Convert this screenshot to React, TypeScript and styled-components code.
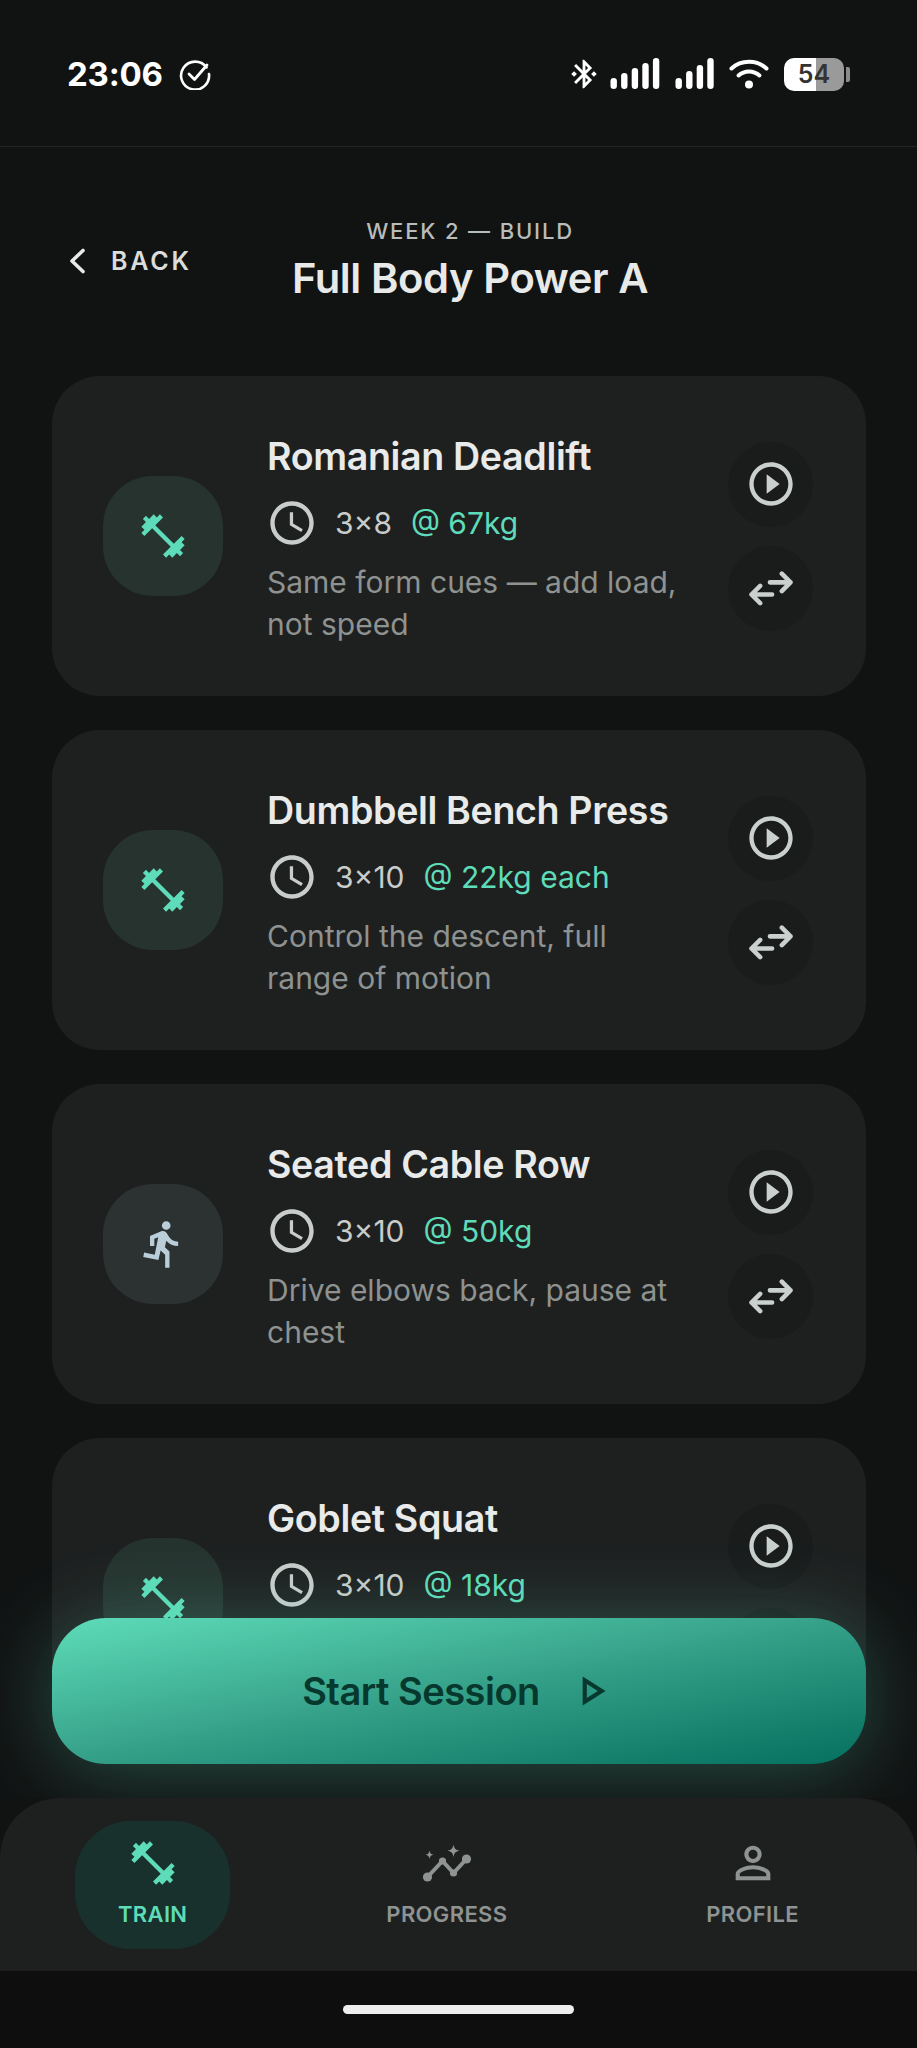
import React from "react";
import styled, { createGlobalStyle } from "styled-components";
import {
  MdAccessTime,
  MdBluetoothConnected,
  MdDirectionsRun,
  MdFitnessCenter,
  MdOutlinePlayArrow,
  MdPersonOutline,
  MdPlayCircleOutline,
} from "react-icons/md";

const GlobalStyle = createGlobalStyle`
  html, body { margin: 0; padding: 0; background: #111313; }
  * { box-sizing: border-box; }
  body { font-family: Inter, "Noto Sans", sans-serif; }
`;

const Page = styled.div`
  width: 917px;
  height: 2048px;
  display: flex;
  flex-direction: column;
  overflow: hidden;
  background: #111313;
`;

const StatusBar = styled.div`
  height: 147px;
  flex: none;
  border-bottom: 1px solid #232525;
  padding: 56px 67px 0 67px;
  display: flex;
  justify-content: space-between;
  align-items: flex-start;
`;
const StatusLeft = styled.div`
  display: flex;
  align-items: center;
  gap: 16px;
  height: 36px;
`;
const Time = styled.span`
  font-size: 33px;
  font-weight: 700;
  color: #fff;
  letter-spacing: -0.2px;
`;
const StatusRight = styled.div`
  display: flex;
  align-items: center;
  height: 36px;
  color: #fff;
`;
const Battery = styled.div`
  width: 60px;
  height: 33px;
  border-radius: 10px;
  margin-left: 15px;
  background: linear-gradient(90deg, #fff 53%, #9a9a9a 53%);
  color: #333;
  font-size: 25px;
  font-weight: 600;
  display: flex;
  align-items: center;
  justify-content: center;
  position: relative;
`;
const BatteryCap = styled.div`
  width: 4px;
  height: 15px;
  margin-left: 2px;
  border-radius: 0 2px 2px 0;
  background: #8a8a8a;
`;

const Header = styled.header`
  height: 229px;
  flex: none;
  display: flex;
  align-items: flex-start;
  padding: 70px 0 0 68px;
`;
const BackButton = styled.div`
  display: flex;
  align-items: center;
  gap: 25px;
  width: 224px;
  height: 30px;
  margin-top: 29px;
  font-size: 25px;
  font-weight: 600;
  letter-spacing: 2.8px;
  color: #dadddc;
`;
const TitleBlock = styled.div`
  display: flex;
  flex-direction: column;
  align-items: center;
`;
const Eyebrow = styled.div`
  font-size: 22px;
  line-height: 28px;
  font-weight: 500;
  letter-spacing: 1.85px;
  color: #b8bcba;
`;
const Title = styled.h1`
  margin: 7px 0 0;
  font-size: 41.7px;
  line-height: 52px;
  font-weight: 600;
  letter-spacing: -0.4px;
  color: #e8eae9;
`;

const Main = styled.main`
  flex: 1;
  min-height: 0;
  position: relative;
  overflow: hidden;
`;
const List = styled.div`
  display: flex;
  flex-direction: column;
  gap: 34px;
  padding: 0 51px 0 52px;
`;
const Card = styled.article`
  height: 320px;
  flex: none;
  border-radius: 48px;
  background: #1e2020;
  display: flex;
  align-items: center;
  padding: 0 53px 0 51px;
`;
const IconBox = styled.div<{ $tone: "green" | "slate" }>`
  width: 120px;
  height: 120px;
  flex: none;
  border-radius: 50px;
  display: flex;
  align-items: center;
  justify-content: center;
  background: ${(p) => (p.$tone === "green" ? "#26332f" : "#2c3132")};
  color: ${(p) => (p.$tone === "green" ? "#5edcb9" : "#b9ced9")};
`;
const Body = styled.div`
  width: 415px;
  flex: none;
  margin-left: 44px;
  padding-top: 7px;
  display: flex;
  flex-direction: column;
`;
const Name = styled.h2`
  margin: 0;
  font-size: 37.6px;
  line-height: 46px;
  font-weight: 600;
  letter-spacing: -0.35px;
  color: #e9ebea;
`;
const Meta = styled.div`
  display: flex;
  align-items: center;
  height: 52px;
  margin-top: 17px;
  margin-left: -1px;
  font-size: 30px;
  color: #c8ccca;
`;
const Sets = styled.span`
  margin-left: 17px;
`;
const Load = styled.span`
  margin-left: 19px;
  color: #5edcb9;
`;
const Note = styled.p`
  margin: 12px 0 0;
  min-height: 84px;
  font-size: 30px;
  line-height: 42px;
  color: #8e9290;
`;
const Actions = styled.div`
  margin-left: auto;
  display: flex;
  flex-direction: column;
  gap: 19px;
`;
const RoundButton = styled.div`
  width: 85px;
  height: 85px;
  border-radius: 50%;
  background: #1a1c1c;
  color: #c9d0cd;
  display: flex;
  align-items: center;
  justify-content: center;
`;
const StartButton = styled.div`
  position: absolute;
  left: 52px;
  right: 51px;
  bottom: 34px;
  height: 146px;
  border-radius: 54px;
  background: linear-gradient(to bottom right, #5edcb9 0%, #35a088 50%, #04705e 100%);
  box-shadow: 0 6px 80px rgba(94, 220, 185, 0.3);
  display: flex;
  align-items: center;
  justify-content: center;
  gap: 26px;
  color: #06382d;
  font-size: 38px;
  font-weight: 600;
  letter-spacing: -0.5px;
`;

const Nav = styled.nav`
  height: 173px;
  flex: none;
  position: relative;
  border-radius: 60px 60px 0 0;
  background: #1e2020;
  display: flex;
  justify-content: space-between;
  align-items: center;
  padding: 0 75px;
`;
const NavItem = styled.div<{ $active?: boolean }>`
  height: 128px;
  padding: 16px 43px 0;
  border-radius: 56px;
  display: flex;
  flex-direction: column;
  align-items: center;
  background: ${(p) => (p.$active ? "#18312c" : "transparent")};
  color: ${(p) => (p.$active ? "#5edcb9" : "#8f9391")};
`;
const NavLabel = styled.span`
  margin-top: 11px;
  font-size: 22px;
  line-height: 28px;
  font-weight: 600;
  letter-spacing: 0.35px;
`;
const HomeArea = styled.div`
  height: 77px;
  flex: none;
  background: #0e0e0e;
  display: flex;
  justify-content: center;
  padding-top: 34px;
`;
const HomePill = styled.div`
  width: 231px;
  height: 9px;
  border-radius: 5px;
  background: #eeeeee;
`;

const ChevronBack = () => (
  <svg width="18" height="26" viewBox="0 0 18 26" fill="none">
    <path d="M15 2.5 4 13l11 10.5" stroke="#e8eae9" strokeWidth="3.6" strokeLinecap="round" strokeLinejoin="round" />
  </svg>
);

const CheckCircle = () => (
  <svg width="32" height="32" viewBox="0 0 32 32" fill="none">
    <path d="M27.5 9.5A14 14 0 1 0 30 16" stroke="#fff" strokeWidth="2.6" strokeLinecap="round" />
    <path d="M10 16l5.5 5.5L28 7" stroke="#fff" strokeWidth="2.8" strokeLinecap="round" strokeLinejoin="round" />
  </svg>
);

const Signal = ({ bars }: { bars: number[] }) => (
  <svg width={bars.length * 10.6} height="32" viewBox={`0 0 ${bars.length * 10.6} 32`}>
    {bars.map((h, i) => (
      <rect key={i} x={i * 10.6 + 0.5} y={31 - h} width="6.4" height={h} rx="3.2" fill="#fff" />
    ))}
  </svg>
);

const Wifi = () => (
  <svg width="40" height="32" viewBox="0 0 40 32" fill="none" style={{ marginLeft: 12 }}>
    <path d="M2.5 10.5C12 1.5 28 1.5 37.5 10.5" stroke="#fff" strokeWidth="4" strokeLinecap="round" />
    <path d="M9.5 17.5c6-5.5 15-5.5 21 0" stroke="#fff" strokeWidth="4" strokeLinecap="round" />
    <circle cx="20" cy="26.5" r="4" fill="#fff" />
  </svg>
);

const Swap = () => (
  <svg width="52" height="52" viewBox="0 0 24 24" fill="none">
    <path d="M11.5 9.4H21M17 5.4l4 4-4 4M12.5 15H3M7 11l-4 4 4 4" stroke="currentColor" strokeWidth="2.1" strokeLinecap="round" strokeLinejoin="round" />
  </svg>
);

const ProgressGlyph = () => (
  <svg width="52" height="52" viewBox="0 0 52 52" fill="currentColor">
    <path d="M6.5 40 21.5 24l11 12 13-14" fill="none" stroke="currentColor" strokeWidth="4" strokeLinejoin="round" />
    <circle cx="6.5" cy="40" r="4.6" />
    <circle cx="21.5" cy="24" r="3.6" />
    <circle cx="32.5" cy="36" r="3.6" />
    <circle cx="45.5" cy="22" r="4.6" />
    <path d="M32.5 7.5c.8 4 2 5.4 6 6.2-4 .8-5.2 2-6 6.2-.8-4.2-2-5.4-6-6.2 4-.8 5.2-2.2 6-6.2z" />
    <path d="M8.5 13.5c.5 2.8 1.3 3.6 4 4.2-2.7.6-3.5 1.4-4 4.2-.5-2.8-1.3-3.6-4-4.2 2.7-.6 3.5-1.4 4-4.2z" />
  </svg>
);

type Exercise = {
  name: string;
  sets: string;
  load: string;
  note: string;
  kind: "green" | "slate";
};

const exercises: Exercise[] = [
  { name: "Romanian Deadlift", sets: "3×8", load: "@ 67kg", note: "Same form cues — add load, not speed", kind: "green" },
  { name: "Dumbbell Bench Press", sets: "3×10", load: "@ 22kg each", note: "Control the descent, full range of motion", kind: "green" },
  { name: "Seated Cable Row", sets: "3×10", load: "@ 50kg", note: "Drive elbows back, pause at chest", kind: "slate" },
  { name: "Goblet Squat", sets: "3×10", load: "@ 18kg", note: "", kind: "green" },
];

export default function App() {
  return (
    <Page>
      <GlobalStyle />
      <StatusBar>
        <StatusLeft>
          <Time>23:06</Time>
          <CheckCircle />
        </StatusLeft>
        <StatusRight>
          <MdBluetoothConnected size={34} style={{ marginRight: 9 }} />
          <Signal bars={[11, 16, 21, 26, 31]} />
          <span style={{ width: 12 }} />
          <Signal bars={[11, 18, 24, 31]} />
          <Wifi />
          <Battery>54</Battery>
          <BatteryCap />
        </StatusRight>
      </StatusBar>

      <Header>
        <BackButton>
          <ChevronBack />
          BACK
        </BackButton>
        <TitleBlock>
          <Eyebrow>WEEK 2 — BUILD</Eyebrow>
          <Title>Full Body Power A</Title>
        </TitleBlock>
      </Header>

      <Main>
        <List>
          {exercises.map((ex) => (
            <Card key={ex.name}>
              <IconBox $tone={ex.kind}>
                {ex.kind === "green" ? <MdFitnessCenter size={52} /> : <MdDirectionsRun size={52} />}
              </IconBox>
              <Body>
                <Name>{ex.name}</Name>
                <Meta>
                  <MdAccessTime size={52} />
                  <Sets>{ex.sets}</Sets>
                  <Load>{ex.load}</Load>
                </Meta>
                <Note>{ex.note}</Note>
              </Body>
              <Actions>
                <RoundButton>
                  <MdPlayCircleOutline size={52} />
                </RoundButton>
                <RoundButton>
                  <Swap />
                </RoundButton>
              </Actions>
            </Card>
          ))}
        </List>
        <StartButton>
          Start Session
          <MdOutlinePlayArrow size={50} />
        </StartButton>
      </Main>

      <Nav>
        <NavItem $active>
          <MdFitnessCenter size={52} />
          <NavLabel>TRAIN</NavLabel>
        </NavItem>
        <NavItem>
          <ProgressGlyph />
          <NavLabel>PROGRESS</NavLabel>
        </NavItem>
        <NavItem>
          <MdPersonOutline size={52} />
          <NavLabel>PROFILE</NavLabel>
        </NavItem>
      </Nav>
      <HomeArea>
        <HomePill />
      </HomeArea>
    </Page>
  );
}
